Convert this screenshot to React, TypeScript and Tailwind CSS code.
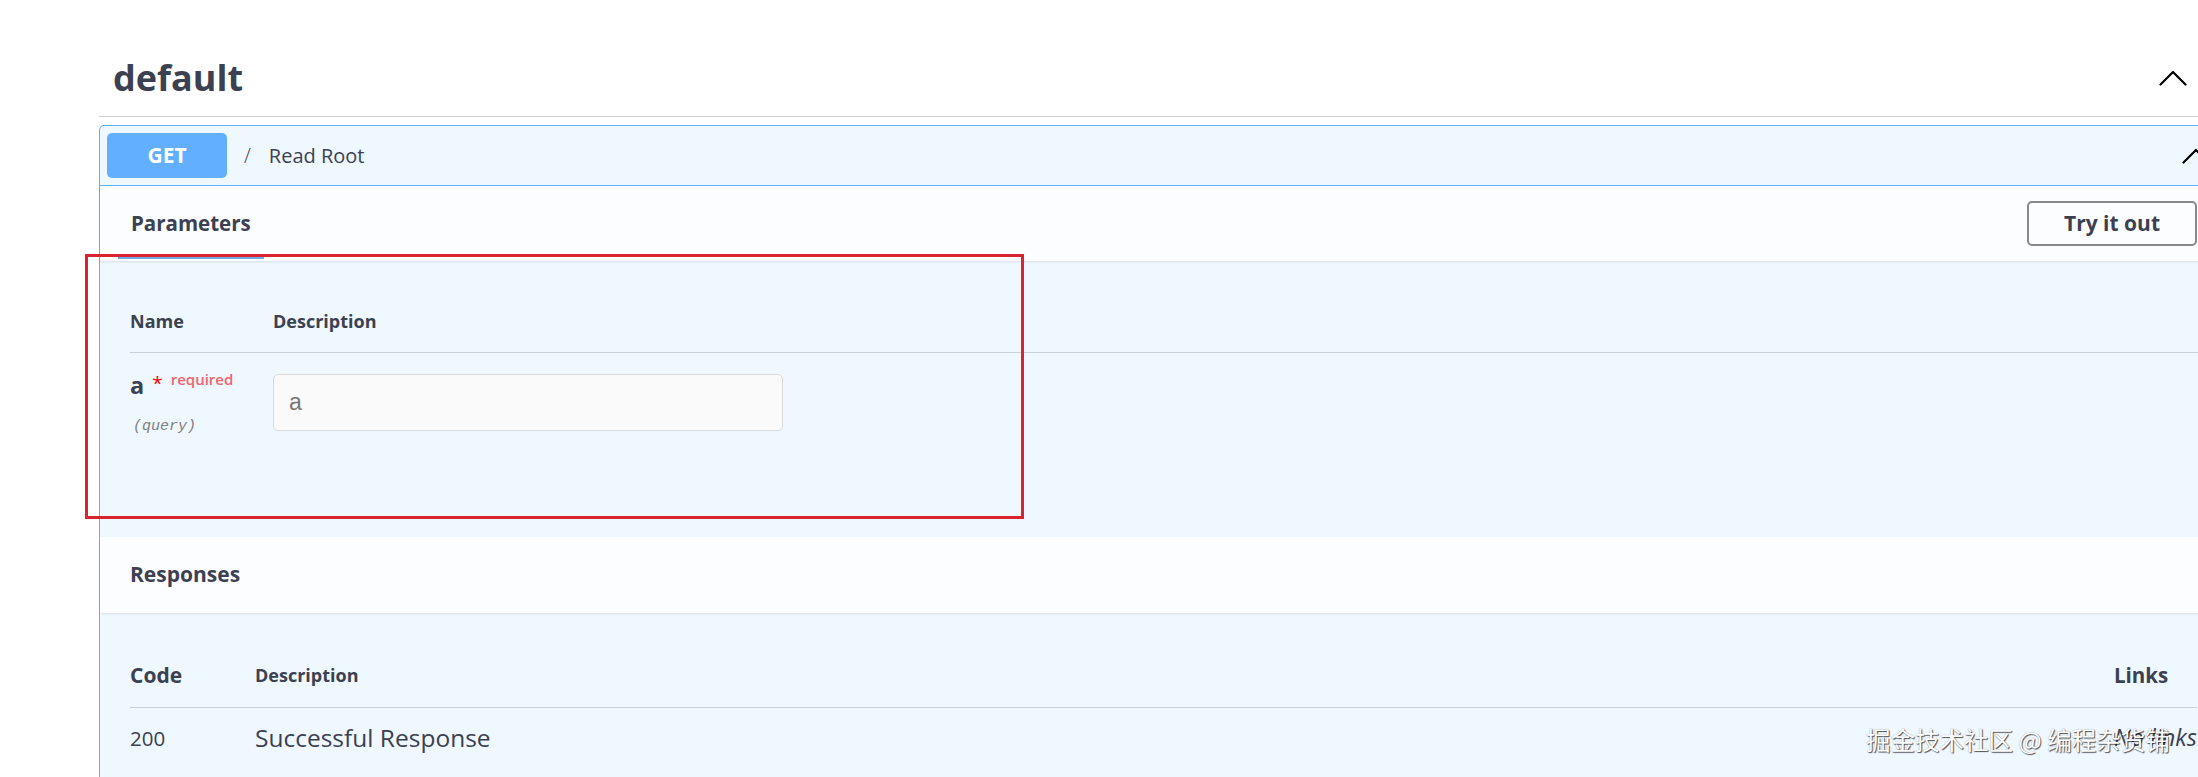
import React from "react";

function ChevronUp({ className }: { className?: string }) {
  return (
    <svg className={className} width="28" height="16" viewBox="0 0 28 16" fill="none">
      <polyline points="1.5,14.5 14,2 26.5,14.5" stroke="#000" strokeWidth="2.2" strokeLinecap="round" strokeLinejoin="round" />
    </svg>
  );
}

export default function App() {
  return (
    <div className="relative w-[2198px] h-[777px] overflow-hidden bg-white text-[#3b4151] font-['Open_Sans',sans-serif]">
      <div className="ml-[99px] w-[2119px] pt-[39px]">
        {/* Tag heading */}
        <div className="flex items-center justify-between h-[78px] border-b border-[#cfd1d5] pl-[14px] pr-[31px]">
          <h4 className="text-[36px] font-bold leading-none">default</h4>
          <ChevronUp />
        </div>

        {/* Opblock */}
        <div className="mt-[8px] border border-[#61affe] rounded-[5px] bg-[#eff7ff]">
          {/* Summary */}
          <div className="flex items-center p-[7px] border-b border-[#61affe]">
            <div className="flex items-center justify-center w-[120px] h-[45px] rounded-[5px] bg-[#61affe] text-white font-bold text-[21px]">
              GET
            </div>
            <span className="ml-[17px] text-[20px] font-light">/</span>
            <span className="ml-[18px] text-[20px]">Read Root</span>
            <ChevronUp className="ml-auto" />
          </div>

          {/* Parameters header */}
          <div className="flex items-stretch justify-between h-[75px] bg-white/80 shadow-[0_1px_2px_rgba(0,0,0,0.1)] pl-[18px] pr-[20px]">
            <div className="flex flex-col">
              <div className="flex-1 flex items-center pt-[5px] px-[13px]">
                <h4 className="text-[20.5px] font-bold">Parameters</h4>
              </div>
              <div className="h-[3px] bg-[#6ea6e8] mb-[2px]" />
            </div>
            <div className="flex items-center">
              <button className="w-[170px] h-[45px] rounded-[5px] border-2 border-[#888] bg-transparent text-[21px] font-bold text-[#3b4151]">
                Try it out
              </button>
            </div>
          </div>

          {/* Parameters body */}
          <div className="h-[276px] pt-[29px] pl-[30px]">
            <div className="flex items-center h-[63px] border-b border-[#c9d0da] text-[18px] font-bold">
              <div className="w-[143px]">Name</div>
              <div>Description</div>
            </div>
            <div className="flex pt-[21px]">
              <div className="w-[143px] flex flex-col">
                <div className="flex items-start leading-none">
                  <span className="text-[23.5px] font-bold">a</span>
                  <span className="ml-[8px] text-[19px] text-[#ff0000] leading-none">*</span>
                  <span className="ml-[8px] -mt-[2px] text-[15px] font-semibold text-[#f0646e]">required</span>
                </div>
                <div className="mt-[18px] ml-[3px] font-['Liberation_Mono',monospace] italic text-[15px] text-[#808080]">(query)</div>
              </div>
              <div className="w-[510px] h-[57px] rounded-[5px] border border-[#d9d9d9] bg-[#fafafa] flex items-center pl-[15px] font-['Liberation_Sans',sans-serif] text-[23px] text-[#777]">
                a
              </div>
            </div>
          </div>

          {/* Responses header */}
          <div className="flex items-center h-[76px] bg-white/80 shadow-[0_1px_2px_rgba(0,0,0,0.1)] pl-[30px]">
            <h4 className="text-[21px] font-bold">Responses</h4>
          </div>

          {/* Responses body */}
          <div className="pt-[31px] pl-[30px] pr-[20px] h-[200px]">
            <div className="flex items-center h-[64px] border-b border-[#c9d0da] font-bold">
              <div className="w-[125px] text-[21px]">Code</div>
              <div className="flex-1 text-[18px]">Description</div>
              <div className="w-[83px] text-[20.5px]">Links</div>
            </div>
            <div className="flex items-center h-[60px]">
              <div className="w-[125px] text-[20.5px]">200</div>
              <div className="flex-1 text-[24.5px]">Successful Response</div>
              <div className="w-[83px] text-[23.5px] italic whitespace-nowrap">No links</div>
            </div>
          </div>
        </div>
      </div>

      {/* Annotation box */}
      <div className="absolute left-[85px] top-[254px] w-[939px] h-[265px] border-[3px] border-[#d9232f] pointer-events-none" />

      {/* Watermark */}
      <div className="absolute left-[1866px] top-[722px] text-[24.5px] text-white font-['Noto_Sans_CJK_SC',sans-serif] whitespace-nowrap [text-shadow:1px_1px_1px_rgba(0,0,0,0.65),0_0_1px_rgba(0,0,0,0.4)]">
        掘金技术社区 @ 编程杂货铺
      </div>
    </div>
  );
}
